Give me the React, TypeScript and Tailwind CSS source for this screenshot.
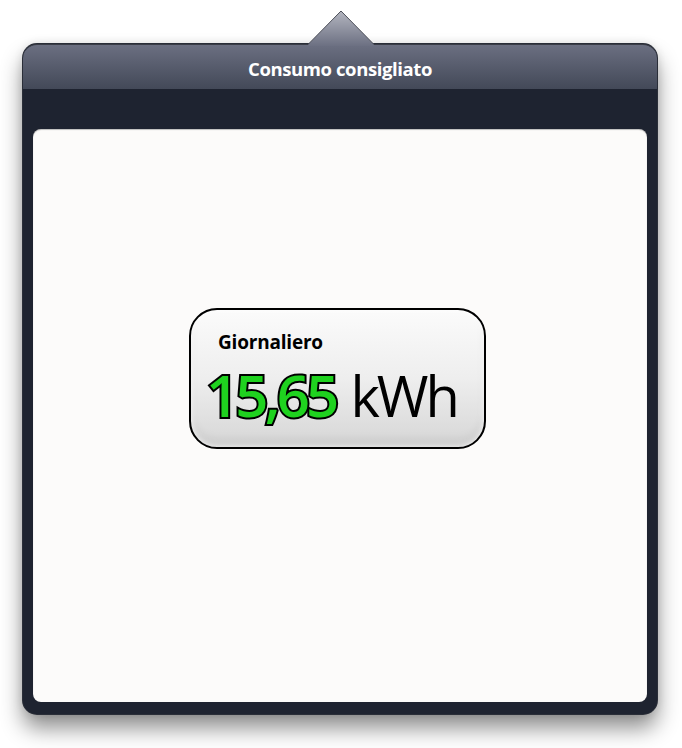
export default function App() {
  return (
    <div className="min-h-[748px] w-full bg-white pt-[44px] pl-[23px]" style={{ fontFamily: '"Open Sans", "Liberation Sans", sans-serif' }}>
      <div className="relative flex h-[670px] w-[634px] flex-col rounded-[14px] bg-[#1e2330] shadow-[0_14px_22px_rgba(0,0,0,0.45),0_0_10px_rgba(0,0,0,0.12)] ring-1 ring-[#2a2e38]">
        {/* arrow */}
        <svg className="absolute left-[285px] top-[-34px]" width="66" height="36" viewBox="0 0 66 36">
          <defs>
            <linearGradient id="arrow" x1="0" y1="0" x2="0" y2="1">
              <stop offset="0" stopColor="#b4b6c0" />
              <stop offset="1" stopColor="#6c7082" />
            </linearGradient>
          </defs>
          <path d="M0 34.5 L33 1 L66 34.5 L66 36 L0 36 Z" fill="url(#arrow)" />
          <path d="M0 34.5 L33 1 L66 34.5" fill="none" stroke="#4b4e58" strokeWidth="1" />
        </svg>
        <div className="flex h-[45px] items-center justify-center rounded-t-[14px] bg-gradient-to-b from-[#6b6f81] to-[#434958] border-t border-[#3a3d47]">
          <h1 className="mt-[3px] text-[18.5px] font-bold tracking-[-0.4px] text-white">Consumo consigliato</h1>
        </div>
        <div className="flex flex-1 flex-col px-[10px] pt-[40px] pb-[12px]">
          <div className="flex flex-1 flex-col rounded-[8px] bg-[#fcfbfa] pt-[179px] pl-[156px] shadow-[inset_0_1px_1px_rgba(0,0,0,0.25)]">
            <div className="flex h-[141px] w-[297px] flex-col rounded-[28px] border-[2.5px] border-black bg-gradient-to-b from-[#fbfbfb] via-[#eeeeee] to-[#d6d6d6] shadow-[inset_0_0_6px_rgba(255,255,255,0.9),inset_0_-8px_10px_rgba(0,0,0,0.06)]">
              <div className="pl-[27px] pt-[20px] text-[19px] font-bold leading-[24px] tracking-[-0.2px] text-black">Giornaliero</div>
              <div className="mt-[9px] flex items-baseline pl-[15px] leading-[64px]">
                <span className="text-[58px] font-semibold tracking-[-3.8px] text-[#1fd21f] [-webkit-text-stroke:4px_#000] [paint-order:stroke_fill]">15,65</span>
                <span className="ml-[15px] text-[56px] font-normal tracking-[-3px] text-black">kWh</span>
              </div>
            </div>
          </div>
        </div>
      </div>
    </div>
  );
}
